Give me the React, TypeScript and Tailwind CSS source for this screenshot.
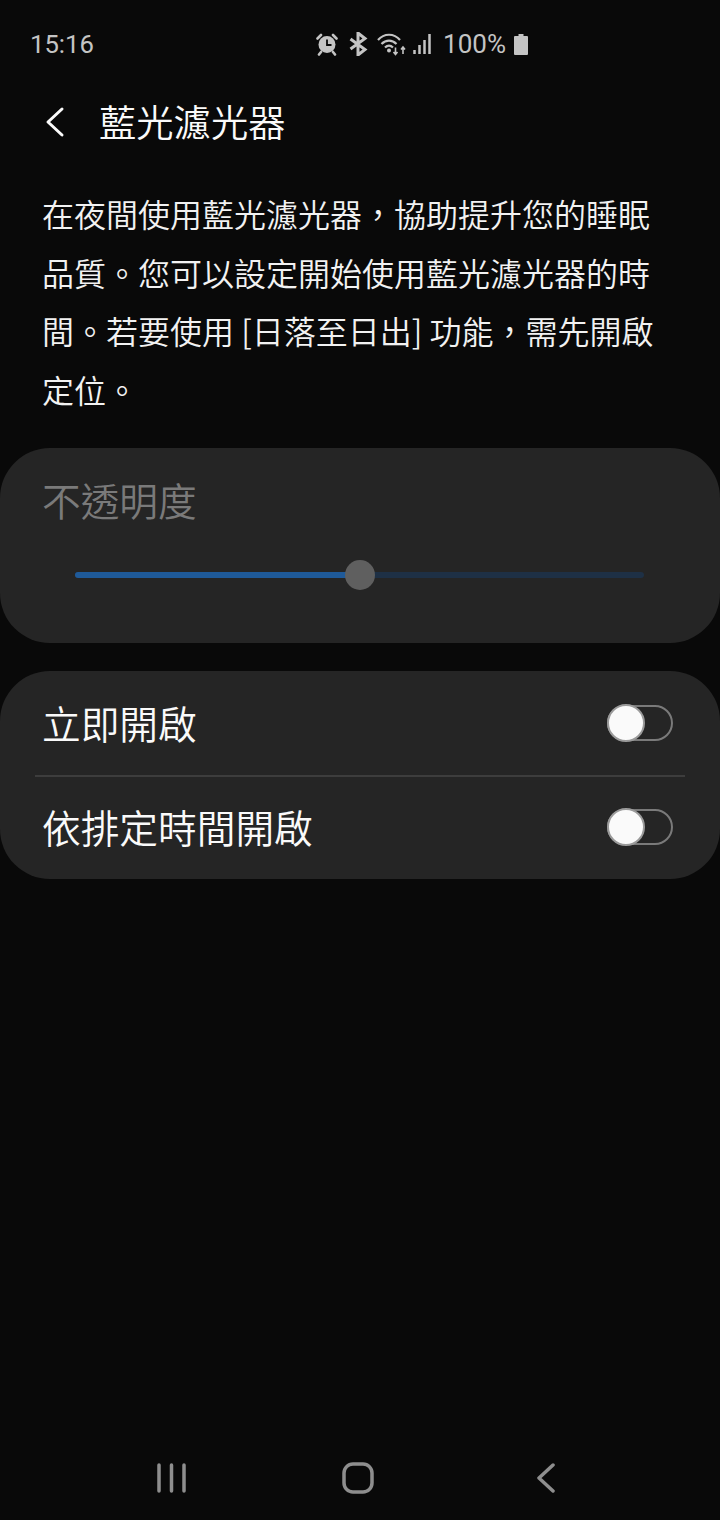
import React from 'react';

const cjk = "font-['Noto_Sans_CJK_TC','Roboto',sans-serif]";

const StatusIcons: React.FC = () => (
  <div className="flex items-center text-[#c4c4c4]">
    {/* alarm */}
    <svg width="22" height="24" viewBox="0 0 22 24" className="mr-[10px]">
      <circle cx="11" cy="12.500" r="8.500" fill="currentColor" />
      <path d="M11 7.500v5.500h4.500" fill="none" stroke="#090909" strokeWidth="1.800" />
      <path d="M1.500 6.500L5 3M20.500 6.500L17 3M5 20l-2 2.500M17 20l2 2.500" fill="none" stroke="currentColor" strokeWidth="2.600" strokeLinecap="round" />
    </svg>
    {/* bluetooth */}
    <svg width="20" height="24" viewBox="0 0 20 24" className="mr-[9px]">
      <path d="M2.500 7l14.500 10.500L10 23V1l7 5.500L2.500 17" fill="none" stroke="currentColor" strokeWidth="3" />
    </svg>
    {/* wifi with data arrows */}
    <svg width="29" height="24" viewBox="0 0 29 24" className="mr-[7px]">
      <path d="M1 8C7 1 17 1 23 8M4.500 12C9 7.500 15 7.500 19.500 12M8 15.500c2.500-2.500 5.500-2.500 8 0" fill="none" stroke="currentColor" strokeWidth="2.200" />
      <circle cx="12" cy="18.500" r="2" fill="currentColor" />
      <path d="M18.500 15.500v6.500M16.500 20l2 2.500 2-2.500M26 22v-6.500M24 17.500l2-2.500 2 2.500" fill="none" stroke="currentColor" strokeWidth="1.600" />
    </svg>
    {/* signal */}
    <svg width="18" height="24" viewBox="0 0 18 24" className="mr-[12px]">
      <path d="M1.500 22v-4M6.500 22v-9M11.500 22V8M16.500 22V2" fill="none" stroke="currentColor" strokeWidth="2.500" />
    </svg>
    <span className="text-[26px] leading-none font-['Roboto',sans-serif] mr-[8px]">100%</span>
    {/* battery */}
    <svg width="14" height="21" viewBox="0 0 14 21">
      <path d="M4.500 0h5v2H13a1 1 0 0 1 1 1v17a1 1 0 0 1-1 1H1a1 1 0 0 1-1-1V3a1 1 0 0 1 1-1h3.500z" fill="currentColor" />
    </svg>
  </div>
);

const Toggle: React.FC = () => (
  <div className="relative w-[66px] h-[36px] rounded-full border-2 border-[#7a7a7a]">
    <div className="absolute left-[-2px] top-[-3px] w-[38px] h-[38px] rounded-full bg-[#fafafa] border-2 border-[#9a9a9a]" />
  </div>
);

export default function App() {
  return (
    <div className={`w-[720px] h-[1520px] bg-[#090909] text-[#fafafa] flex flex-col ${cjk}`}>
      {/* Status bar */}
      <div className="h-[88px] pl-[30px] pr-[192px] pt-[31px] flex items-start justify-between">
        <span className="text-[25.700px] leading-[27px] font-['Roboto',sans-serif] text-[#c4c4c4]">15:16</span>
        <StatusIcons />
      </div>

      {/* Header */}
      <div className="h-[68px] pl-[43px] flex items-center">
        <svg width="24" height="32" viewBox="0 0 24 32" className="mr-[32px]">
          <path d="M19 3L5 16l14 13" fill="none" stroke="#fafafa" strokeWidth="3" strokeLinecap="round" strokeLinejoin="round" />
        </svg>
        <h1 className="mt-[-2px] text-[37.300px] leading-[50px] font-[350]">藍光濾光器</h1>
      </div>

      {/* Description */}
      <p className="mt-[28px] pl-[42px] pr-[40px] text-[32px] leading-[58.700px] font-[350] text-[#f2f2f2]">
        在夜間使用藍光濾光器，協助提升您的睡眠品質。您可以設定開始使用藍光濾光器的時間。若要使用 [日落至日出] 功能，需先開啟定位。
      </p>

      {/* Opacity card */}
      <div className="mt-[29px] h-[195px] rounded-[50px] bg-[#252525] pl-[42px] pr-[43px] pt-[25px]">
        <div className="text-[38.700px] leading-[52px] font-[350] text-[#7a7a7a]">不透明度</div>
        <div className="relative mt-[47px] ml-[33px] mr-[33px] h-[6px] rounded-full bg-[#1e3045]">
          <div className="h-full w-[285px] rounded-full bg-[#1f5a99]" />
          <div className="absolute left-[270px] top-[-12px] w-[30px] h-[30px] rounded-full bg-[#5f5f5f]" />
        </div>
      </div>

      {/* Toggles card */}
      <div className="mt-[28px] h-[208px] rounded-[50px] bg-[#252525] flex flex-col">
        <div className="h-[104px] pl-[42px] pr-[47px] flex items-center justify-between">
          <span className="pb-[2px] text-[38.700px] leading-[52px] font-[350]">立即開啟</span>
          <Toggle />
        </div>
        <div className="mx-[35px] h-[2px] bg-[#3d3d3d]" />
        <div className="h-[102px] pl-[42px] pr-[47px] pb-[2px] flex items-center justify-between">
          <span className="pb-[1px] text-[38.700px] leading-[52px] font-[350]">依排定時間開啟</span>
          <Toggle />
        </div>
      </div>

      {/* Nav bar */}
      <div className="mt-auto h-[80px] pb-[5px] pl-[157px] flex items-center text-[#8e8e8e]">
        <svg width="29" height="30" viewBox="0 0 29 30">
          <path d="M2 2v26M14.500 2v26M27 2v26" fill="none" stroke="currentColor" strokeWidth="3.500" strokeLinecap="round" />
        </svg>
        <svg width="32" height="32" viewBox="0 0 32 32" className="ml-[156px]">
          <rect x="2" y="2" width="28" height="28" rx="9" fill="none" stroke="currentColor" strokeWidth="3.500" />
        </svg>
        <svg width="18" height="30" viewBox="0 0 18 30" className="ml-[163px]">
          <path d="M16 2L2 15l14 13" fill="none" stroke="currentColor" strokeWidth="3.500" strokeLinecap="round" strokeLinejoin="round" />
        </svg>
      </div>
    </div>
  );
}
